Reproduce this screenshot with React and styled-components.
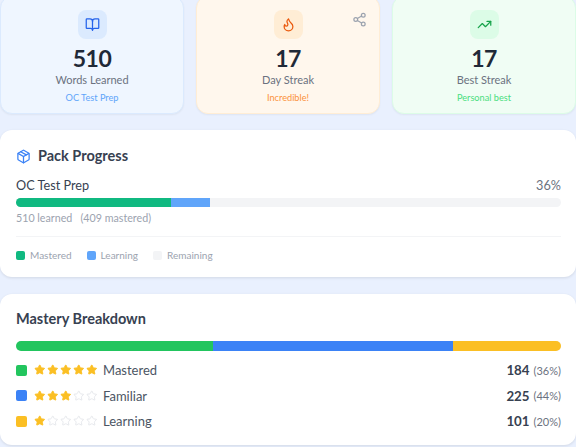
import React from "react";
import styled, { createGlobalStyle } from "styled-components";
import { BookOpen, Flame, TrendingUp, Package, Share2, Star } from "lucide-react";

const Global = createGlobalStyle`
    html, body {
        margin: 0;
        padding: 0;
        background: #e9f0fe;
        font-family: Lato, "Liberation Sans", sans-serif;
        overflow: hidden;
    }
`

const Page = styled.div`
    width: 576px;
    height: 447px;
    overflow: hidden;
    display: flex;
    flex-direction: column;
`

const Stats = styled.div`
    display: grid;
    grid-template-columns: repeat(3, 1fr);
    gap: 12px;
    margin-top: -4px;
`

const StatCard = styled.div`
    position: relative;
    height: 118px;
    box-sizing: border-box;
    padding-top: 13px;
    display: flex;
    flex-direction: column;
    align-items: center;
    border-radius: 12px;
    background: ${p => p.$bg};
    border: 1px solid ${p => p.$border};
    box-shadow: 0 1px 2px rgba(0, 0, 0, 0.05);
`

const IconBox = styled.div`
    width: 29px;
    height: 29px;
    border-radius: 8px;
    display: flex;
    align-items: center;
    justify-content: center;
    background: ${p => p.$bg};
    color: ${p => p.$color};
`

const StatNum = styled.div`
    margin-top: 5px;
    font-size: 23px;
    line-height: 28px;
    font-weight: 700;
    letter-spacing: -0.5px;
    color: #1f2937;
`

const StatLabel = styled.div`
    margin-top: 1px;
    font-size: 11px;
    line-height: 14px;
    color: #6b7280;
`

const StatSub = styled.div`
    margin-top: 4px;
    font-size: 9.2px;
    line-height: 14px;
    color: ${p => p.$color};
`

const ShareBtn = styled.div`
    position: absolute;
    top: 15px;
    right: 12px;
    color: #9ca3af;
    display: flex;
`

const Panel = styled.div`
    background: #fff;
    border-radius: 12px;
    box-shadow: 0 1px 3px rgba(0, 0, 0, 0.1);
    padding: ${p => p.$pad}px 15px 0 16px;
    box-sizing: border-box;
    height: ${p => p.$h}px;
    margin-top: ${p => p.$top}px;
`

const Title = styled.div`
    display: flex;
    align-items: center;
    gap: 7px;
    font-size: 14.5px;
    line-height: 20px;
    font-weight: 700;
    color: #374151;
`

const RowBetween = styled.div`
    display: flex;
    justify-content: space-between;
    align-items: center;
    margin-top: 10px;
    font-size: 12.7px;
    line-height: 18px;
    color: #374151;
`

const Percent = styled.span`
    color: #6b7280;
`

const Bar = styled.div`
    display: flex;
    height: ${p => p.$h}px;
    border-radius: 999px;
    overflow: hidden;
    background: #f3f4f6;
    margin-top: ${p => p.$top}px;
`

const Seg = styled.div`
    background: ${p => p.$color};
`

const Note = styled.div`
    margin-top: 3px;
    font-size: 10.7px;
    line-height: 15px;
    color: #9ca3af;
`

const Legend = styled.div`
    display: flex;
    gap: 15px;
    border-top: 1px solid #f3f4f6;
    margin-top: 11px;
    padding-top: 11px;
`

const LegendItem = styled.div`
    display: flex;
    align-items: center;
    gap: 5px;
    font-size: 10px;
    line-height: 14px;
    color: #9ca3af;
`

const Dot = styled.span`
    width: ${p => p.$size}px;
    height: ${p => p.$size}px;
    border-radius: 2px;
    background: ${p => p.$color};
    flex-shrink: 0;
`

const Rows = styled.div`
    display: flex;
    flex-direction: column;
    gap: 5.5px;
    margin-top: 9px;
`

const Row = styled.div`
    display: flex;
    align-items: center;
    height: 20px;
    font-size: 13px;
    color: #4b5563;
`

const Stars = styled.div`
    display: flex;
    gap: 1.5px;
    margin: 0 6px 0 6.5px;
`

const Count = styled.span`
    margin-left: auto;
    font-size: 13.3px;
    font-weight: 700;
    color: #374151;
`

const Pct = styled.span`
    margin-left: 4px;
    font-size: 11px;
    color: #6b7280;
`

const breakdown = [
    { name: "Mastered", color: "#22c55e", stars: 5, count: 184, pct: 36 },
    { name: "Familiar", color: "#3b82f6", stars: 3, count: 225, pct: 44 },
    { name: "Learning", color: "#fbbf24", stars: 1, count: 101, pct: 20 },
]

export default function App() {
    return <Page>
        <Global />
        <Stats>
            <StatCard $bg="#eff6ff" $border="#dbeafe">
                <IconBox $bg="#dbeafe" $color="#2563eb"><BookOpen size={15} /></IconBox>
                <StatNum>510</StatNum>
                <StatLabel>Words Learned</StatLabel>
                <StatSub $color="#60a5fa">OC Test Prep</StatSub>
            </StatCard>
            <StatCard $bg="#fff7ed" $border="#ffedd5">
                <IconBox $bg="#ffedd5" $color="#ea580c"><Flame size={15} /></IconBox>
                <StatNum>17</StatNum>
                <StatLabel>Day Streak</StatLabel>
                <StatSub $color="#fb923c">Incredible!</StatSub>
                <ShareBtn><Share2 size={15} /></ShareBtn>
            </StatCard>
            <StatCard $bg="#f0fdf4" $border="#dcfce7">
                <IconBox $bg="#dcfce7" $color="#16a34a"><TrendingUp size={15} /></IconBox>
                <StatNum>17</StatNum>
                <StatLabel>Best Streak</StatLabel>
                <StatSub $color="#4ade80">Personal best</StatSub>
            </StatCard>
        </Stats>
        <Panel $h={147} $top={16} $pad={16}>
            <Title><Package size={15} color="#3b82f6" />Pack Progress</Title>
            <RowBetween><span>OC Test Prep</span><Percent>36%</Percent></RowBetween>
            <Bar $h={9} $top={4}>
                <Seg $color="#10b981" style={{ width: "28.4%" }} />
                <Seg $color="#60a5fa" style={{ width: "7.2%" }} />
            </Bar>
            <Note>510 learned &nbsp; (409 mastered)</Note>
            <Legend>
                <LegendItem><Dot $size={9} $color="#10b981" />Mastered</LegendItem>
                <LegendItem><Dot $size={9} $color="#60a5fa" />Learning</LegendItem>
                <LegendItem><Dot $size={9} $color="#f3f4f6" />Remaining</LegendItem>
            </Legend>
        </Panel>
        <Panel $h={151} $top={17} $pad={15}>
            <Title>Mastery Breakdown</Title>
            <Bar $h={10} $top={12}>
                {breakdown.map(b => <Seg key={b.name} $color={b.color} style={{ width: (b.count / 510 * 100) + "%" }} />)}
            </Bar>
            <Rows>
                {breakdown.map(b => <Row key={b.name}>
                    <Dot $size={11} $color={b.color} />
                    <Stars>
                        {[1, 2, 3, 4, 5].map(i => <Star key={i} size={11.5}
                            fill={i <= b.stars ? "#fbbf24" : "none"}
                            color={i <= b.stars ? "#fbbf24" : "#e5e7eb"} />)}
                    </Stars>
                    {b.name}
                    <Count>{b.count}</Count>
                    <Pct>({b.pct}%)</Pct>
                </Row>)}
            </Rows>
        </Panel>
    </Page>
}
